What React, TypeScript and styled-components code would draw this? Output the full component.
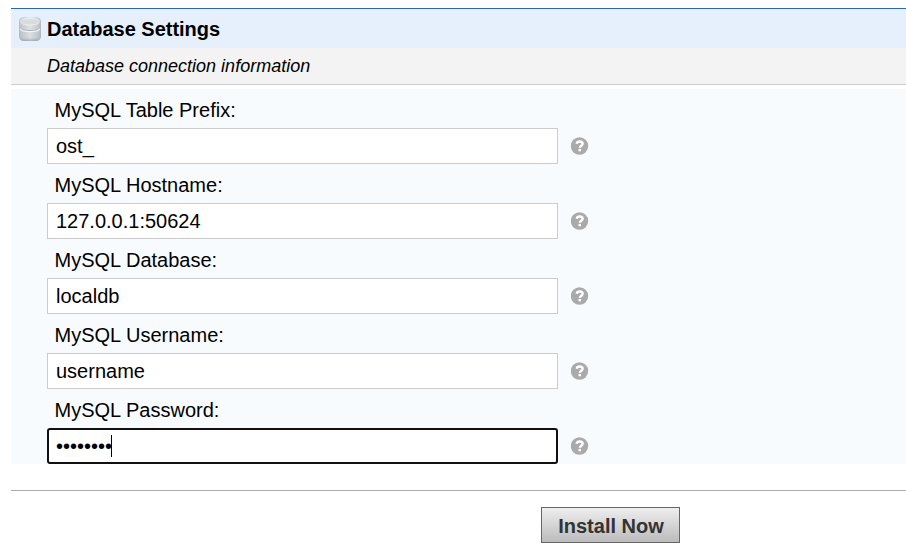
import React from "react";
import styled, { createGlobalStyle, css } from "styled-components";

const GlobalStyle = createGlobalStyle`
  * { box-sizing: border-box; }
  body {
    margin: 0;
    background: #fff;
    color: #000;
    font-family: "Liberation Sans", Arial, sans-serif;
    font-size: 20px;
    overflow: hidden;
  }
`;

const Page = styled.main`
  height: 553px;
  padding: 8px 0 0 11px;
`;

const Header = styled.header`
  display: flex;
  align-items: center;
  gap: 6px;
  height: 40px;
  padding: 1px 0 0 8px;
  border-top: 1px solid #2a67ac;
  background: #e6f0fd;
`;

const Title = styled.h1`
  margin: 0;
  font-size: 20px;
  line-height: 24px;
  font-weight: bold;
  letter-spacing: -0.02px;
`;

const Description = styled.p`
  height: 37px;
  margin: 0 0 4px;
  padding-left: 36px;
  border-bottom: 1px solid #ccc;
  background: #f3f3f3;
  font-size: 18px;
  line-height: 37px;
  font-style: italic;
`;

const Form = styled.section`
  height: 375px;
  padding-left: 36px;
  background: #f7fbfe;
`;

const Row = styled.div`
  height: 75px;
  padding-top: 1px;
`;

const Label = styled.label`
  display: block;
  height: 38px;
  padding-left: 7.5px;
  line-height: 40px;
`;

const Control = styled.div`
  display: flex;
  align-items: center;
  gap: 13px;
`;

const Field = styled.div<{ $focused?: boolean }>`
  display: flex;
  align-items: center;
  width: 511px;
  height: 36px;
  padding: 0 8px;
  border: 1px solid #ccc;
  background: #fff;
  line-height: 24px;
  ${({ $focused }) =>
    $focused &&
    css`
      padding: 0 7px;
      border: 2px solid #101010;
      border-radius: 3px;
    `}
`;

const Caret = styled.span`
  width: 1px;
  height: 22px;
  margin-left: -1px;
  background: #000;
`;

const Help = styled.svg`
  width: 18px;
  height: 18px;
`;

const Footer = styled.footer`
  margin-top: 26px;
  padding: 16px 0 0 530px;
  border-top: 1px solid #aaa;
`;

const InstallButton = styled.button`
  display: block;
  width: 139px;
  height: 36px;
  padding: 3px 0 0 1px;
  border: 1px solid #666;
  border-radius: 0;
  background: linear-gradient(#eee, #bbb);
  color: #333;
  font: bold 20px "Liberation Sans", Arial, sans-serif;
`;

function DatabaseIcon() {
  return (
    <svg width="22" height="26" viewBox="0 0 22 26">
      <defs>
        <linearGradient id="body">
          <stop offset="0" stopColor="#b4bac0" />
          <stop offset=".15" stopColor="#c7ccd1" />
          <stop offset=".5" stopColor="#e0e4e7" />
          <stop offset=".85" stopColor="#c7ccd1" />
          <stop offset="1" stopColor="#afb5bc" />
        </linearGradient>
        <linearGradient id="shade" x2="0" y2="1">
          <stop offset="0" stopColor="#fff" stopOpacity=".15" />
          <stop offset=".85" stopColor="#929aa3" stopOpacity=".08" />
          <stop offset="1" stopColor="#737c86" stopOpacity=".5" />
        </linearGradient>
      </defs>
      <rect y="1" width="22" height="24" rx="5" ry="4.500" fill="url(#body)" />
      <rect y="1" width="22" height="24" rx="5" ry="4.500" fill="url(#shade)" />
      <path d="M2 4.500C4 2 18 2 20 4.500c1 3.200-3 4.500-9 4.500S1 7.700 2 4.500Z" fill="#d9dcdf" stroke="#edf0f1" />
      <path d="M1 11.500c1 2.800 5 3 10 3s9-.2 10-3" fill="none" stroke="#a6adb4" />
      <path d="M1.200 12.800c1 2.600 5 2.900 9.800 2.900s8.800-.3 9.800-2.900" fill="none" stroke="#f1f4f6" strokeWidth="1.200" />
    </svg>
  );
}

function HelpIcon() {
  return (
    <Help viewBox="0 0 18 18" aria-label="Help">
      <circle cx="8.500" cy="9" r="8.700" fill="#aaa" />
      <path d="M5.700 6.700C6 5.200 7 4.500 8.700 4.500c1.800 0 2.900.9 2.900 2.300 0 2.100-2.700 1.900-2.700 4" fill="none" stroke="#fff" strokeWidth="2.500" />
      <path d="M7.500 11.900H10v2.400H7.500Z" fill="#fff" />
    </Help>
  );
}

const settings = [
  { label: "MySQL Table Prefix:", value: "ost_" },
  { label: "MySQL Hostname:", value: "127.0.0.1:50624" },
  { label: "MySQL Database:", value: "localdb" },
  { label: "MySQL Username:", value: "username" },
  { label: "MySQL Password:", value: "••••••••", focused: true },
];

export default function App() {
  return (
    <>
      <GlobalStyle />
      <Page>
        <Header>
          <DatabaseIcon />
          <Title>Database Settings</Title>
        </Header>
        <Description>Database connection information</Description>
        <Form>
          {settings.map(({ label, value, focused }) => (
            <Row key={label}>
              <Label>{label}</Label>
              <Control>
                <Field $focused={focused}>
                  {value}
                  {focused && <Caret />}
                </Field>
                <HelpIcon />
              </Control>
            </Row>
          ))}
        </Form>
        <Footer>
          <InstallButton>Install Now</InstallButton>
        </Footer>
      </Page>
    </>
  );
}
